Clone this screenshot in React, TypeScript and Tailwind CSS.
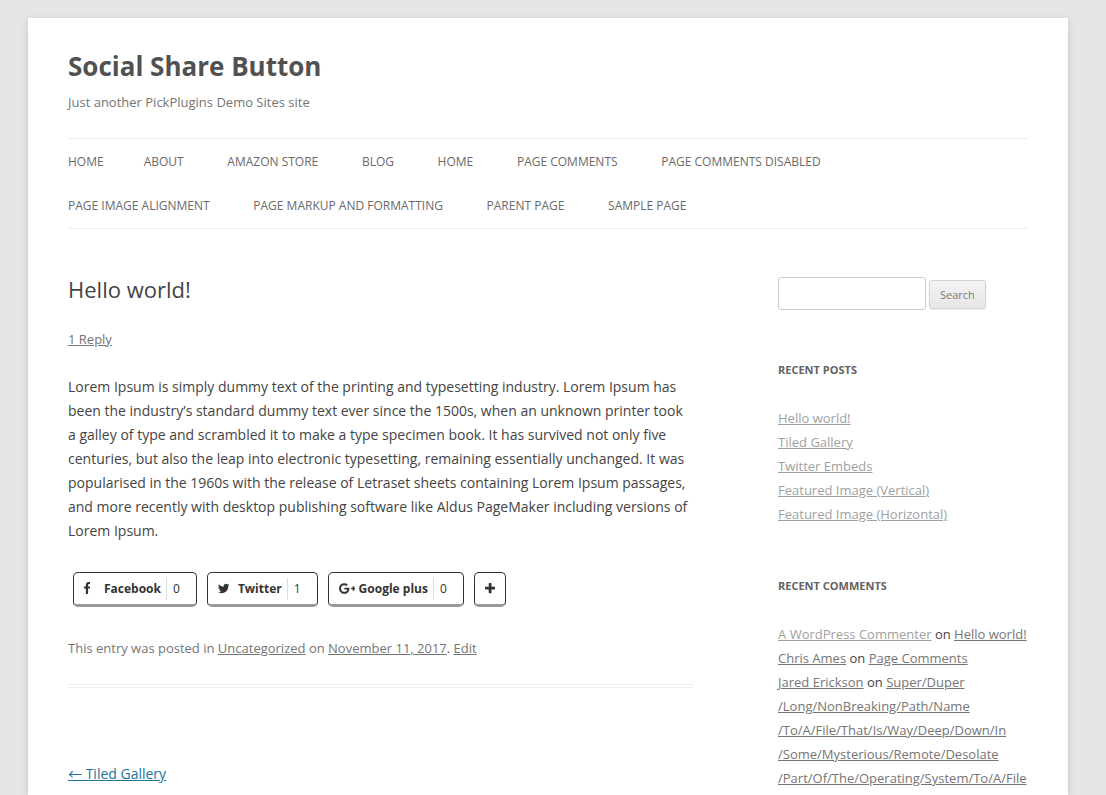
import type { ReactNode } from "react";

const mainMenu = [
  "About",
  "Amazon Store",
  "Blog",
  "Home",
  "Page Comments",
  "Page Comments Disabled",
  "Page Image Alignment",
  "Page Markup And Formatting",
  "Parent Page",
  "Sample Page",
];

const recentPosts = [
  "Hello world!",
  "Tiled Gallery",
  "Twitter Embeds",
  "Featured Image (Vertical)",
  "Featured Image (Horizontal)",
];

type Glyph = { viewBox: string; path: string };

const icons: Record<"facebook" | "twitter" | "google" | "plus", Glyph> = {
  facebook: {
    viewBox: "479 0 864 1792",
    path: "M1343 12v264h-157q-86 0-116 36t-30 108v189h293l-39 296h-254v759h-306v-759h-255v-296h255v-218q0-186 104-288.500t277-102.500q147 0 228 12z",
  },
  twitter: {
    viewBox: "108 0 1576 1792",
    path: "M1684 408q-67 98-162 167 1 14 1 42 0 130-38 259.500t-115.500 248.500-184.500 210.500-258 146-323 54.500q-271 0-496-145 35 4 78 4 225 0 401-138-105-2-188-64.500t-114-159.500q33 5 61 5 43 0 85-11-112-23-185.500-111.500t-73.500-205.500v-4q68 38 146 41-66-44-105-115t-39-154q0-88 44-163 121 149 294.500 238.500t371.500 99.500q-8-38-8-74 0-134 94.500-228.500t228.500-94.500q140 0 236 102 109-21 205-78-37 115-142 178 93-10 186-50z",
  },
  google: {
    viewBox: "0 0 2304 1792",
    path: "M1437 913q0 208-87 370.500t-248 254-369 91.500q-149 0-285-58t-234-156-156-234-58-285 58-285 156-234 234-156 285-58q286 0 491 192l-199 191q-117-113-292-113-123 0-227.500 62t-165.500 168.500-61 232.500 61 232.500 165.500 168.500 227.500 62q83 0 152.500-23t114.500-57.500 78.500-78.500 49-83 21.500-74h-416v-252h692q12 63 12 122zm867-122v210h-209v209h-210v-209h-209v-210h209v-209h210v209h209z",
  },
  plus: {
    viewBox: "192 0 1408 1792",
    path: "M1600 736v192q0 40-28 68t-68 28h-416v416q0 40-28 68t-68 28h-192q-40 0-68-28t-28-68v-416h-416q-40 0-68-28t-28-68v-192q0-40 28-68t68-28h416v-416q0-40 28-68t68-28h192q40 0 68 28t28 68v416h416q40 0 68 28t28 68z",
  },
};

function Icon({ glyph }: { glyph: Glyph }) {
  return (
    <svg viewBox={glyph.viewBox} className="h-[13px] w-auto" fill="currentColor" aria-hidden="true">
      <path d={glyph.path} />
    </svg>
  );
}

function MutedLink({ children, light = false }: { children: ReactNode; light?: boolean }) {
  return (
    <a href="#" className={light ? "text-[#9f9f9f] underline" : "text-[#757575] underline"}>
      {children}
    </a>
  );
}

function MenuItem({ children }: { children: ReactNode }) {
  return (
    <li className="mr-10 inline-block align-top text-xs leading-[44px] text-[#6a6a6a] uppercase">
      <a href="#">{children}</a>
    </li>
  );
}

function ShareButton({ glyph, label, count }: { glyph: Glyph; label: string; count: number }) {
  return (
    <button
      type="button"
      className="flex h-[35px] items-center rounded-[5px] border border-b-[3px] border-[#333] border-b-[#999] pr-4 pl-2.5 text-xs text-[#333]"
    >
      <span className="flex w-5 items-center">
        <Icon glyph={glyph} />
      </span>
      <span className="pr-[5px] font-bold">{label}</span>
      <span className="border-l border-[#ddd] pl-1.5 leading-[22px]">{count}</span>
    </button>
  );
}

function WidgetTitle({ children }: { children: ReactNode }) {
  return <h3 className="mb-6 text-[11px] leading-6 font-bold text-[#636363] uppercase">{children}</h3>;
}

export default function App() {
  return (
    <div className="h-screen overflow-hidden bg-[#e6e6e6] pt-[18px] pr-[38px] pl-7 font-['Open_Sans',sans-serif] text-sm leading-6 text-[#444]">
      <div className="mx-auto min-h-full max-w-[1040px] bg-white px-10 shadow-[0_2px_6px_rgba(100,100,100,0.3)]">
        <header className="pt-6">
          <h1 className="text-[26px] leading-[48px] font-bold text-[#515151]">
            <a href="#">Social Share Button</a>
          </h1>
          <p className="text-[13px] leading-6 text-[#757575]">Just another PickPlugins Demo Sites site</p>
          <nav className="mt-6" aria-label="Main menu">
            <ul className="border-y border-[#ededed] pt-px">
              <MenuItem>Home</MenuItem>
              {mainMenu.flatMap((item) => [<MenuItem key={item}>{item}</MenuItem>, " "])}
            </ul>
          </nav>
        </header>

        <div className="flex justify-between pt-12">
          <main className="w-[65.1%]">
            <article className="border-b-4 border-double border-[#ededed] pb-6">
              <h2 className="text-[22px] leading-6">Hello world!</h2>
              <div className="mt-[26px] text-[13px]">
                <MutedLink>1 Reply</MutedLink>
              </div>
              <p className="mt-6">
                Lorem Ipsum is simply dummy text of the printing and typesetting industry. Lorem Ipsum has been the
                industry’s standard dummy text ever since the 1500s, when an unknown printer took a galley of type and
                scrambled it to make a type specimen book. It has survived not only five centuries, but also the leap
                into electronic typesetting, remaining essentially unchanged. It was popularised in the 1960s with the
                release of Letraset sheets containing Lorem Ipsum passages, and more recently with desktop publishing
                software like Aldus PageMaker including versions of Lorem Ipsum.
              </p>
              <div className="mt-[29px] flex gap-2.5 pl-[5px]">
                <ShareButton glyph={icons.facebook} label="Facebook" count={0} />
                <ShareButton glyph={icons.twitter} label="Twitter" count={1} />
                <ShareButton glyph={icons.google} label="Google plus" count={0} />
                <button
                  type="button"
                  aria-label="More"
                  className="flex h-[35px] w-8 items-center justify-center rounded-[5px] border border-b-[3px] border-[#333] border-b-[#999] text-[#333]"
                >
                  <Icon glyph={icons.plus} />
                </button>
              </div>
              <footer className="mt-[29px] text-[13px] text-[#757575]">
                This entry was posted in <MutedLink>Uncategorized</MutedLink> on{" "}
                <MutedLink>November 11, 2017</MutedLink>. <MutedLink>Edit</MutedLink>
              </footer>
            </article>
            <nav className="mt-[74px]" aria-label="Post navigation">
              <a href="#" className="text-[#21759b] underline">
                <span className="font-['Noto_Sans_CJK_JP',sans-serif] leading-none">←</span> Tiled Gallery
              </a>
            </nav>
          </main>

          <aside className="w-[26.04%] text-[13px]">
            <form className="mb-12 flex items-center gap-[3px]" role="search">
              <input
                type="text"
                aria-label="Search for:"
                className="h-[33px] w-[148px] rounded-[3px] border border-[#ccc] px-1.5"
              />
              <button
                type="button"
                className="mt-px h-[29px] rounded-[3px] border border-[#d2d2d2] bg-linear-to-b from-[#f4f4f4] to-[#e6e6e6] px-2.5 pt-px text-[11px] text-[#7c7c7c] shadow-[0_1px_2px_rgba(64,64,64,0.1)]"
              >
                Search
              </button>
            </form>
            <section className="mb-12">
              <WidgetTitle>Recent Posts</WidgetTitle>
              <ul>
                {recentPosts.map((post) => (
                  <li key={post}>
                    <MutedLink light>{post}</MutedLink>
                  </li>
                ))}
              </ul>
            </section>
            <section>
              <WidgetTitle>Recent Comments</WidgetTitle>
              <ul>
                <li>
                  <MutedLink light>A WordPress Commenter</MutedLink> on <MutedLink>Hello world!</MutedLink>
                </li>
                <li>
                  <MutedLink>Chris Ames</MutedLink> on <MutedLink>Page Comments</MutedLink>
                </li>
                <li>
                  <MutedLink>Jared Erickson</MutedLink> on{" "}
                  <MutedLink>
                    Super/Duper
                    <wbr />
                    /Long/NonBreaking/Path/Name
                    <wbr />
                    /To/A/File/That/Is/Way/Deep/Down/In
                    <wbr />
                    /Some/Mysterious/Remote/Desolate
                    <wbr />
                    /Part/Of/The/Operating/System/To/A/File
                  </MutedLink>
                </li>
              </ul>
            </section>
          </aside>
        </div>
      </div>
    </div>
  );
}
